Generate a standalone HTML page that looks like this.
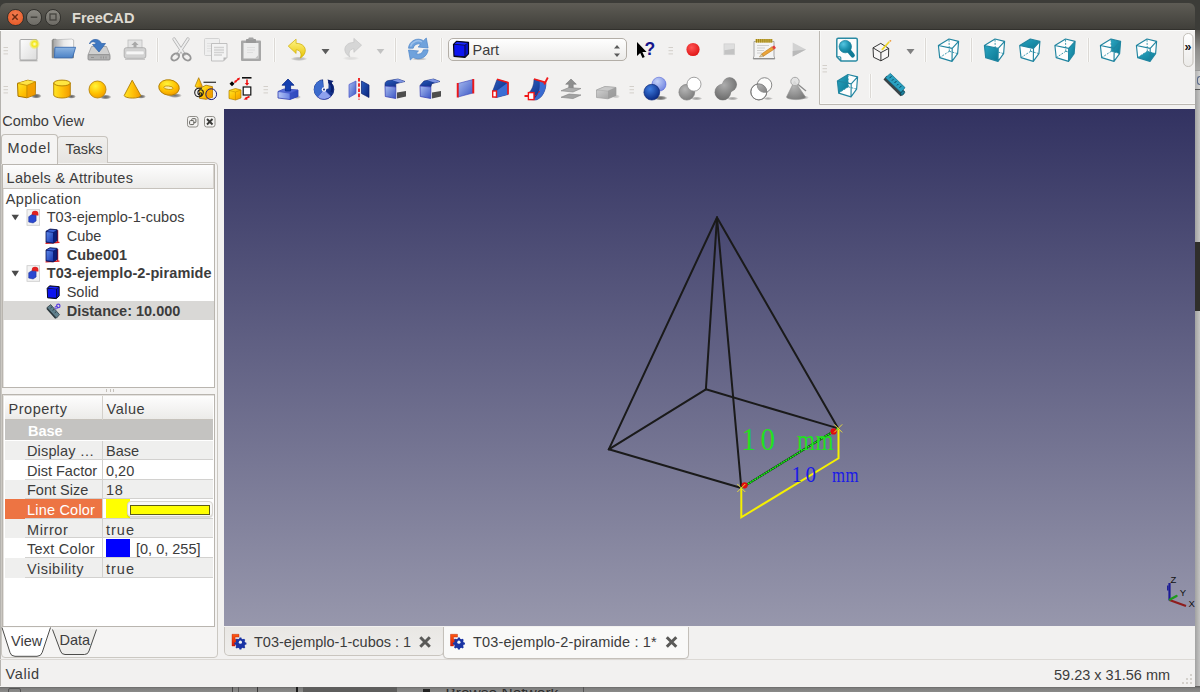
<!DOCTYPE html>
<html><head><meta charset="utf-8"><title>FreeCAD</title>
<style>
*{box-sizing:border-box;margin:0;padding:0}
html,body{width:1200px;height:692px;overflow:hidden;background:#3b3a36;font-family:"Liberation Sans","DejaVu Sans",sans-serif;font-size:14.5px;color:#3c3c3c}
.abs,.abs-all *{position:absolute}
.abs{position:absolute}
.nw{white-space:nowrap}
svg{position:absolute;overflow:visible}
#desk{left:0;top:0;width:1200px;height:692px;background:#3c3c38}
#title{left:0;top:3px;width:1195px;height:27px;background:linear-gradient(#5e5c55,#403f3a);border-radius:6px 6px 0 0;border-bottom:1px solid #32312d}
#title .t{left:72px;top:5.6px;font-weight:bold;font-size:14.6px;color:#dfdbd2;line-height:18px}
.wb{width:16.4px;height:16.4px;border-radius:50%;top:6.2px;border:1px solid #33322e}
#win{left:0;top:30px;width:1195px;height:656.5px;background:#f2f1f0;border-top:1px solid #fbfbfa}
#view{left:224px;top:109px;width:971px;height:517.4px;background:linear-gradient(#323261,#9797ac)}
#status{left:0;top:659px;width:1195px;height:28px;border-top:1px solid #dcd9d5}
.sep{width:1px;height:24px;background:#d3d0cb;border-right:1px solid #fafafa;width:2px}
.hd{width:5px;height:8px;border-top:1px solid #c9c1b9;border-bottom:1px solid #c9c1b9}
.hd:after{content:"";position:absolute;left:0;top:2.5px;width:5px;height:1px;background:#c9c1b9}
.row{left:0;height:19px;line-height:19px;white-space:nowrap}
</style></head><body>
<div id="desk" class="abs"></div>

<div class="abs" style="left:1195px;top:30px;width:5px;height:657px;background:linear-gradient(90deg,#a2a2a1,#c4c4c3)"></div>
<div class="abs" style="left:1195px;top:30px;width:5px;height:40px;background:linear-gradient(#55544f,#8f8f8d 50%,#a8a8a6)"></div>
<div class="abs" style="left:1195px;top:70px;width:5px;height:20px;background:linear-gradient(90deg,#b2b2b1,#d2d2d1);border-top:1px solid #999;border-bottom:1px solid #555"></div>
<div class="abs" style="left:1197px;top:76px;width:3px;height:9px;border:1.5px solid #5a6a8a;border-right:none;border-radius:3px 0 0 3px"></div>
<div class="abs" style="left:1195px;top:242px;width:5px;height:69px;background:#2f2e2b"></div>
<div class="abs" style="left:0;top:686px;width:1200px;height:6px;background:linear-gradient(#5c5c5b,#7e7e7d 40%,#8b8b8a)"></div>
<div class="abs" style="left:303px;top:687px;width:94px;height:5px;background:#5e5e5d"></div>
<div class="abs" style="left:232px;top:687px;width:1px;height:5px;background:#444"></div><div class="abs" style="left:238px;top:687px;width:1px;height:5px;background:#555"></div><div class="abs" style="left:257px;top:687px;width:1px;height:5px;background:#3a3a3a"></div><div class="abs" style="left:296px;top:687px;width:2px;height:5px;background:#1a1a1a"></div><div class="abs" style="left:583px;top:687px;width:1px;height:5px;background:#555"></div>
<div class="abs" style="left:8px;top:688px;width:13px;height:6px;border:1px solid #555;border-radius:2px"></div>
<div class="abs" style="left:423px;top:689px;width:7px;height:3px;background:#222"></div>
<div class="abs nw" style="left:436px;top:688.6px;height:4px;overflow:hidden;width:130px"><span class="abs" style="left:0;top:-3.2px;font-size:15.5px;line-height:16px;color:#2c2c2c">- Browse Network</span></div>

<div id="title" class="abs">
 <div class="abs wb" style="left:7.2px;background:radial-gradient(circle at 50% 35%,#f37e52,#e4531f)"><svg width="16" height="16" style="left:-1px;top:-1px" viewBox="0 0 16 16"><path d="M5.3 5.3 L10.7 10.7 M10.7 5.3 L5.3 10.7" stroke="#6b2a12" stroke-width="1.5" fill="none"/></svg></div>
 <div class="abs wb" style="left:26px;background:linear-gradient(#8b8982,#6d6b65)"><svg width="16" height="16" style="left:-1px;top:-1px" viewBox="0 0 16 16"><path d="M4.7 8.2 H11.3" stroke="#45443f" stroke-width="1.5" fill="none"/></svg></div>
 <div class="abs wb" style="left:44.5px;background:linear-gradient(#8b8982,#6d6b65)"><svg width="16" height="16" style="left:-1px;top:-1px" viewBox="0 0 16 16"><rect x="5" y="5" width="6" height="6" stroke="#45443f" stroke-width="1.3" fill="none"/></svg></div>
 <div class="abs t">FreeCAD</div>
</div>
<div id="win" class="abs"></div><div class="abs" style="left:0;top:31px;width:1px;height:655px;background:#b5b3af"></div>

<svg width="1200" height="80" style="left:0;top:30px" viewBox="0 30 1200 80" font-family="'Liberation Sans',sans-serif"><defs>
<linearGradient id="gPage" x1="0" y1="0" x2="1" y2="1"><stop offset="0" stop-color="#fdfdfd"/><stop offset="1" stop-color="#dcdcdc"/></linearGradient>
<radialGradient id="gGlow"><stop offset="0" stop-color="#ffffd0"/><stop offset=".45" stop-color="#f4e81a"/><stop offset="1" stop-color="#f4e81a" stop-opacity="0"/></radialGradient>
<linearGradient id="gFold" x1="0" y1="0" x2="0" y2="1"><stop offset="0" stop-color="#8db5e2"/><stop offset="1" stop-color="#4c82c6"/></linearGradient>
<linearGradient id="gYel" x1="0" y1="0" x2="1" y2="1"><stop offset="0" stop-color="#ffec2e"/><stop offset=".55" stop-color="#ffbf00"/><stop offset="1" stop-color="#f09800"/></linearGradient>
<linearGradient id="gYelH" x1="0" y1="0" x2="1" y2="0"><stop offset="0" stop-color="#ffe526"/><stop offset=".5" stop-color="#ffc20a"/><stop offset="1" stop-color="#f29a00"/></linearGradient>
<radialGradient id="gYelR" cx=".38" cy=".3" r=".75"><stop offset="0" stop-color="#fff53a"/><stop offset=".6" stop-color="#ffc000"/><stop offset="1" stop-color="#f09a00"/></radialGradient>
<linearGradient id="gUndo" x1="0" y1="0" x2="0" y2="1"><stop offset="0" stop-color="#fff68a"/><stop offset="1" stop-color="#e8c200"/></linearGradient>
<radialGradient id="gLens" cx=".35" cy=".3" r=".8"><stop offset="0" stop-color="#56c6e2"/><stop offset=".55" stop-color="#1d93b0"/><stop offset="1" stop-color="#0b748f"/></radialGradient>
<radialGradient id="gFuse" gradientUnits="userSpaceOnUse" cx="-2" cy="-4" r="15"><stop offset="0" stop-color="#adadad"/><stop offset="1" stop-color="#6c6c6c"/></radialGradient>
<linearGradient id="gPap" x1="0" y1="0" x2="1" y2="0"><stop offset="0" stop-color="#a9a9a9"/><stop offset=".5" stop-color="#e9e9e9"/><stop offset="1" stop-color="#fafafa"/></linearGradient>
<linearGradient id="gBlueE" x1="0" y1="0" x2="1" y2="0"><stop offset="0" stop-color="#b4c4f4"/><stop offset=".6" stop-color="#6a84e4"/><stop offset="1" stop-color="#3f5ad0"/></linearGradient>
<radialGradient id="gRec" cx=".4" cy=".35" r=".7"><stop offset="0" stop-color="#f55"/><stop offset="1" stop-color="#de1212"/></radialGradient>
<linearGradient id="gTeal" x1="0" y1="0" x2="1" y2="1"><stop offset="0" stop-color="#2ba6c2"/><stop offset="1" stop-color="#0b7893"/></linearGradient>
<linearGradient id="gBlue" x1="0" y1="0" x2="1" y2="1"><stop offset="0" stop-color="#a9bdf0"/><stop offset="1" stop-color="#3a55c4"/></linearGradient>
<linearGradient id="gBlueD" x1="0" y1="0" x2="1" y2="1"><stop offset="0" stop-color="#2a5fc0"/><stop offset="1" stop-color="#0a237a"/></linearGradient>
<radialGradient id="gBlueS" cx=".38" cy=".3" r=".75"><stop offset="0" stop-color="#3f7de0"/><stop offset="1" stop-color="#06257e"/></radialGradient>
<radialGradient id="gBlueL" cx=".38" cy=".3" r=".75"><stop offset="0" stop-color="#c4d2f8"/><stop offset="1" stop-color="#6f83e0"/></radialGradient>
<radialGradient id="gGryS" cx=".38" cy=".3" r=".75"><stop offset="0" stop-color="#b5b5b5"/><stop offset="1" stop-color="#7a7a7a"/></radialGradient>
<linearGradient id="gGry" x1="0" y1="0" x2="1" y2="1"><stop offset="0" stop-color="#d6d6d6"/><stop offset="1" stop-color="#9c9c9c"/></linearGradient>
<linearGradient id="gCombo" x1="0" y1="0" x2="0" y2="1"><stop offset="0" stop-color="#ffffff"/><stop offset="1" stop-color="#ebeae8"/></linearGradient>
<radialGradient id="gShd"><stop offset="0" stop-color="#000" stop-opacity=".75"/><stop offset=".6" stop-color="#000" stop-opacity=".5"/><stop offset="1" stop-color="#000" stop-opacity="0"/></radialGradient>
</defs><path d="M819.5 31V104.5H1195" stroke="#bdb9b3" stroke-width="1" fill="none"/>
<path d="M820.5 31V103.5H1195" stroke="#fbfbfa" stroke-width="1" fill="none" opacity=".7"/>
<path d="M3.5 47.5h4.5M3.5 50.7h4.5M3.5 53.9h4.5" stroke="#d3cfca" stroke-width="1"/>
<g transform="translate(28.5 49.5)"><rect x="-8.5" y="-10" width="17" height="20.5" rx="1" fill="url(#gPage)" stroke="#a9a9a9"/><path d="M-9 11.3h18" stroke="#8e8e8e" stroke-width="1" opacity=".7"/><circle cx="6" cy="-5.5" r="5.6" fill="url(#gGlow)"/></g>
<g transform="translate(64 49)"><path d="M-11.8 -8.7 l.8 -1 h3 l1 1 h16.5 v17.5 h-21.3z" fill="#8f8f8b" stroke="#767672" stroke-width=".7"/><path d="M-10 -9.2 l17.5 -.8 l2.2 1.2 v8 h-19.7z" fill="url(#gPap)" stroke="#b5b5b5" stroke-width=".6"/><path d="M-9 -1.7 h20.6 l-3.1 10.5 h-18.1z" fill="url(#gFold)" stroke="#3a6db2" stroke-width=".9" stroke-linejoin="round"/></g>
<g transform="translate(99 49.5)"><path d="M-7.5 -3 h15 l3.5 8.5 h-22z" fill="#d0d0d0" stroke="#9a9a9a" stroke-width=".8"/><rect x="-11" y="5.2" width="22" height="5.3" rx="1" fill="#b2b2b2" stroke="#868686" stroke-width=".8"/><path d="M-8 8h3M2 7v2M4.5 7v2M7 7v2" stroke="#8a8a8a" stroke-width=".8"/><path d="M-9.5 -5.5 C-8.5 -11 0 -12 2.5 -6 L6.5 -6 L0 2.5 L-6.5 -5 L-2.8 -5.5 C-4 -8.5 -7.5 -8.5 -9.5 -5.5z" fill="#3f78c2" stroke="#2b5ea5" stroke-width=".7"/></g>
<g transform="translate(135 49.5)"><rect x="-7" y="-9.5" width="14" height="9" fill="#e4e4e4" stroke="#bdbdbd" stroke-width=".8"/><path d="M0 -8 l3.6 3.4 h-2.1 v2.8 h-3 v-2.8 h-2.1z" fill="#a8a8a8"/><rect x="-10.8" y="-1.8" width="21.6" height="10.6" rx="2.2" fill="#d2d2d2" stroke="#ababab" stroke-width=".9"/><rect x="-9" y="1.6" width="18" height="3.6" rx="1" fill="#f6f6f6" stroke="#c9c9c9" stroke-width=".5"/><path d="M-10 9.8h20" stroke="#bdbdbd"/></g>
<path d="M156.5 38v24M158.5 38v24" stroke="#f9f9f8" stroke-width="1"/><path d="M157.5 38v24" stroke="#dcd9d5" stroke-width="1"/>
<g transform="translate(181 50)"><path d="M-7 -11 L3.2 4.5 M7 -11 L-3.2 4.5" stroke="#b2b2b2" stroke-width="3.2" stroke-linecap="round"/><path d="M-7 -11 L3.2 4.5 M7 -11 L-3.2 4.5" stroke="#eeeeee" stroke-width="1.8" stroke-linecap="round"/><ellipse cx="-5.8" cy="7" rx="4.2" ry="3" transform="rotate(-35 -5.8 7)" fill="none" stroke="#979797" stroke-width="1.9"/><ellipse cx="5.8" cy="7" rx="4.2" ry="3" transform="rotate(35 5.8 7)" fill="none" stroke="#979797" stroke-width="1.9"/></g>
<g transform="translate(216 49.5)"><rect x="-11.5" y="-11" width="15" height="17" rx="1" fill="#efefef" stroke="#cfcfcf" stroke-width=".9"/><path d="M-9 -6h6M-9 -3.5h6M-9 -1h6M-9 1.5h6" stroke="#dcdcdc" stroke-width=".8"/><path d="M-4.5 -6 h15.5 v14 l-3.5 3.5 h-12z" fill="#f3f3f3" stroke="#bababa" stroke-width=".9"/><path d="M-2 -2h10M-2 .5h10M-2 3h10M-2 5.5h8" stroke="#d2d2d2" stroke-width="1.6"/><path d="M11 8 l-3.5 3.5 v-3.5z" fill="#b5b5b5"/></g>
<g transform="translate(251 49.5)"><rect x="-10" y="-9" width="20" height="20.5" rx="1" fill="#a7a7a7"/><rect x="-7.5" y="-6.5" width="15" height="15.5" fill="#ededed"/><rect x="-5" y="-10.5" width="10" height="4" rx=".8" fill="#9a9a9a"/><rect x="-2.5" y="-12" width="5" height="2.5" rx=".8" fill="#a3a3a3"/><path d="M-4 -2h8M-4 .5h8M-4 3h6" stroke="#dedede" stroke-width="1.2"/><path d="M7.5 5.5 l-3.5 3.5 h3.5z" fill="#c2c2c2"/></g>
<path d="M273.5 38v24M275.5 38v24" stroke="#f9f9f8" stroke-width="1"/><path d="M274.5 38v24" stroke="#dcd9d5" stroke-width="1"/>
<g transform="translate(297 49.3)"><ellipse cx="2" cy="9.5" rx="8.5" ry="2.2" fill="url(#gShd)" opacity="0.35"/><path transform="scale(.92)" d="M-9.5 -3.5 L-1 -11 L-1 -6.5 C7 -6.5 10.5 -1 8.5 4 C7.5 6.5 5.5 8.5 3.5 9.5 C5 6.5 5 1 -1 0.5 L-1 4.5z" fill="url(#gUndo)" stroke="#cfae08" stroke-width=".8" stroke-linejoin="round"/></g>
<g transform="translate(325.5 51.5)"><path d="M-4 -2.6h8L0 2.8z" fill="#5b5b5b"/></g>
<g transform="translate(353 48.3)"><ellipse cx="-2" cy="10" rx="8.5" ry="2" fill="url(#gShd)" opacity="0.12"/><path transform="scale(.9)" d="M9.5 -3.5 L1 -11 L1 -6.5 C-7 -6.5 -10.5 -1 -8.5 4 C-7.5 6.5 -5.5 8.5 -3.5 9.5 C-5 6.5 -5 1 1 0.5 L1 4.5z" fill="#d6d6d6" stroke="#c4c4c4" stroke-width=".8" stroke-linejoin="round"/></g>
<g transform="translate(380.5 51.5)"><path d="M-3.8 -2.5h7.6L0 2.6z" fill="#c2c2c2"/></g>
<path d="M394.5 38v24M396.5 38v24" stroke="#f9f9f8" stroke-width="1"/><path d="M395.5 38v24" stroke="#dcd9d5" stroke-width="1"/>
<g transform="translate(418.3 49)"><ellipse cx="1" cy="10" rx="8" ry="1.6" fill="url(#gShd)" opacity="0.3"/><path d="M-9.8 -.8 A9.8 9.8 0 0 1 5.2 -8.3 L8 -11 L9.8 -1 L-.2 -2 L2.4 -4.5 A5.1 5.1 0 0 0 -5.1 -.8z" fill="#6fa2dc" stroke="#4a84c8" stroke-width=".7" stroke-linejoin="round"/><path transform="rotate(180)" d="M-9.8 -.8 A9.8 9.8 0 0 1 5.2 -8.3 L8 -11 L9.8 -1 L-.2 -2 L2.4 -4.5 A5.1 5.1 0 0 0 -5.1 -.8z" fill="#6fa2dc" stroke="#4a84c8" stroke-width=".7" stroke-linejoin="round"/><path d="M-7.8 -2.5 A8 8 0 0 1 3.5 -7.2" stroke="#a9c8ee" stroke-width="1.5" fill="none" opacity=".8"/></g>
<path d="M440.5 38v24M442.5 38v24" stroke="#f9f9f8" stroke-width="1"/><path d="M441.5 38v24" stroke="#dcd9d5" stroke-width="1"/>
<rect x="448.5" y="38.5" width="178" height="22" rx="4.5" fill="url(#gCombo)" stroke="#b3aea7"/>
<g transform="translate(461 49.3) scale(1)"><path d="M-7.5 -5 L-4.5 -8 L7.5 -7 L7.5 4.5 L4 8 L-7 7z" fill="#0a0a2a" stroke="#05051a" stroke-width="1.2" stroke-linejoin="round"/><path d="M-6.8 -4.5 L3.5 -3.8 L3.5 7 L-6.5 6.2z" fill="#0c14f0"/><path d="M-6.5 -5.2 L-4.2 -7.3 L6.8 -6.4 L3.8 -4.5z" fill="#1a28ff"/><path d="M4.4 -4 L7 -6.2 L7 4.2 L4.4 6.8z" fill="#0610c8"/></g>
<text x="472.5" y="54.5" font-size="14.5" fill="#3c3c3c">Part</text>
<path d="M614 48.5 l3 -3.6 l3 3.6z M614 53.5 l3 3.6 l3 -3.6z" fill="#5a5a5a"/>
<g transform="translate(645 50)"><path d="M-8 -8 L-8 6 L-4.8 3 L-2.5 8 L-0.3 7 L-2.6 2 L1.6 2z" fill="#000"/><text x="-.6" y="4.6" font-size="17.5" font-weight="bold" fill="#16168c">?</text></g>
<path d="M668.5 47.5h4.5M668.5 50.7h4.5M668.5 53.9h4.5" stroke="#d3cfca" stroke-width="1"/>
<g transform="translate(693 49.5)"><circle r="6.6" fill="url(#gRec)"/></g>
<g transform="translate(729.2 49.3)"><rect x="-5.2" y="-5.4" width="10.6" height="10.8" fill="#dedede" stroke="#cdcdcd" stroke-width=".7"/><path d="M-4.8 5 v-4 l9.8 -1.6 v5.6z" fill="#c3c3c3"/></g>
<g transform="translate(764 49)"><path d="M-10 -7.5 h20 v14.5 l.8 2.5 h-21.6 l.8 -2.5z" fill="#f4f4f4" stroke="#9d9d9d" stroke-width=".9"/><path d="M-10.8 9.8h21.6" stroke="#8a8a8a" stroke-width="1.2"/><rect x="-8.5" y="-10" width="17" height="3.6" fill="#cdb24a"/><path d="M-7.5 -10v3.6M-5.4 -10v3.6M-3.3 -10v3.6M-1.2 -10v3.6M.9 -10v3.6M3 -10v3.6M5.1 -10v3.6M7.2 -10v3.6" stroke="#8a6d00" stroke-width=".7"/><path d="M-7 -3.5h12M-7 -1h8M-7 1.5h7M-7 4h5" stroke="#c9c9c9" stroke-width=".9"/><path d="M-2.5 5 L8 -2.2 L9.8 .4 L-.7 7.3z" fill="#eba53a" stroke="#b87316" stroke-width=".6"/><path d="M8 -2.2 L10.2 -3.6 L12 -1 L9.8 .4z" fill="#e23c3c"/><path d="M-2.5 5 L-.7 7.3 L-4.6 8z" fill="#e6d3a0" stroke="#8a6d3a" stroke-width=".4"/></g>
<g transform="translate(798 49.5)"><path d="M-5.3 -7 L8 0 L-5.3 7z" fill="#d2d2d2"/><path d="M-5.3 7 L-5.3 1.5 L8 0z" fill="#b9b9b9"/></g>
<path d="M822.5 65.5h4.5M822.5 68.7h4.5M822.5 71.9h4.5" stroke="#d3cfca" stroke-width="1"/>
<g transform="translate(847 49.5)"><path d="M-8.8 -11.2 h17.7 a1.4 1.4 0 0 1 1.4 1.4 v19.8 a1.4 1.4 0 0 1 -1.4 1.4 h-15 l-4.1 -4.1 v-17.1 a1.4 1.4 0 0 1 1.4 -1.4z" fill="#fcfcfc" stroke="#2a8aa3" stroke-width="1.5" stroke-linejoin="round"/><path d="M-10 7.2 h2.8 a1 1 0 0 1 1 1 v3" fill="none" stroke="#2a8aa3" stroke-width="1.1"/><path d="M2.2 1.6 L5.7 5.9" stroke="#0f7b96" stroke-width="4.3" stroke-linecap="round"/><circle cx="-1.7" cy="-2.9" r="6.2" fill="url(#gLens)" stroke="#0f7b96" stroke-width=".7"/></g>
<g transform="translate(881 50)"><path d="M-8 -2.2 L-.2 -6.6 L7.7 -1.6 L7.5 6.6 L-.1 10.8 L-7.5 7.2z M-8 -2.2 L-.1 2.6 L7.7 -1.6 M-.1 2.6 L-.1 10.8" fill="#fafafa" fill-opacity=".6" stroke="#2c2c2c" stroke-width=".95" stroke-linejoin="round"/><path d="M1.3 -.6 L7.8 -7.8" stroke="#f0d828" stroke-width="1.7" stroke-linecap="round"/><circle cx="9.4" cy="-9.2" r=".9" fill="#ef9a3a"/></g>
<g transform="translate(910.5 51.5)"><path d="M-4 -2.6h8L0 2.8z" fill="#808080"/></g>
<path d="M924.5 38v24M926.5 38v24" stroke="#f9f9f8" stroke-width="1"/><path d="M925.5 38v24" stroke="#dcd9d5" stroke-width="1"/>
<g transform="translate(948 50)"><path d="M-9.6 -4.5 L1 -11 L10.6 -8.6 L9.6 3.6 L4.0 11.4 L-8.3 7.6z" fill="#ffffff" fill-opacity=".85"/><path d="M1.3 1.3 L1 -11 M1.3 1.3 L9.6 3.6 M1.3 1.3 L-8.3 7.6" stroke="#2b8ea6" stroke-width=".9" stroke-dasharray="2 1.2" fill="none"/><path d="M-9.6 -4.5 L4.2 -1.6 L4.0 11.4 L-8.3 7.6z M-9.6 -4.5 L1 -11 L10.6 -8.6 L4.2 -1.6z M4.2 -1.6 L10.6 -8.6 L9.6 3.6 L4.0 11.4z" fill="none" stroke="#2185a0" stroke-width="1.15" stroke-linejoin="round"/></g>
<path d="M970.5 38v24M972.5 38v24" stroke="#f9f9f8" stroke-width="1"/><path d="M971.5 38v24" stroke="#dcd9d5" stroke-width="1"/>
<g transform="translate(994 50)"><path d="M-9.6 -4.5 L1 -11 L10.6 -8.6 L9.6 3.6 L4.0 11.4 L-8.3 7.6z" fill="#ffffff" fill-opacity=".85"/><path d="M1.3 1.3 L1 -11 M1.3 1.3 L9.6 3.6 M1.3 1.3 L-8.3 7.6" stroke="#2b8ea6" stroke-width=".9" stroke-dasharray="2 1.2" fill="none"/><path d="M-9.6 -4.5 L4.2 -1.6 L4.0 11.4 L-8.3 7.6z" fill="url(#gTeal)"/><path d="M-9.6 -4.5 L4.2 -1.6 L4.0 11.4 L-8.3 7.6z M-9.6 -4.5 L1 -11 L10.6 -8.6 L4.2 -1.6z M4.2 -1.6 L10.6 -8.6 L9.6 3.6 L4.0 11.4z" fill="none" stroke="#2185a0" stroke-width="1.15" stroke-linejoin="round"/></g>
<g transform="translate(1029.3 50)"><path d="M-9.6 -4.5 L1 -11 L10.6 -8.6 L9.6 3.6 L4.0 11.4 L-8.3 7.6z" fill="#ffffff" fill-opacity=".85"/><path d="M1.3 1.3 L1 -11 M1.3 1.3 L9.6 3.6 M1.3 1.3 L-8.3 7.6" stroke="#2b8ea6" stroke-width=".9" stroke-dasharray="2 1.2" fill="none"/><path d="M-9.6 -4.5 L4.2 -1.6 L10.6 -8.6 L1 -11z" fill="url(#gTeal)"/><path d="M-9.6 -4.5 L4.2 -1.6 L4.0 11.4 L-8.3 7.6z M-9.6 -4.5 L1 -11 L10.6 -8.6 L4.2 -1.6z M4.2 -1.6 L10.6 -8.6 L9.6 3.6 L4.0 11.4z" fill="none" stroke="#2185a0" stroke-width="1.15" stroke-linejoin="round"/></g>
<g transform="translate(1064.5 50)"><path d="M-9.6 -4.5 L1 -11 L10.6 -8.6 L9.6 3.6 L4.0 11.4 L-8.3 7.6z" fill="#ffffff" fill-opacity=".85"/><path d="M1.3 1.3 L1 -11 M1.3 1.3 L9.6 3.6 M1.3 1.3 L-8.3 7.6" stroke="#2b8ea6" stroke-width=".9" stroke-dasharray="2 1.2" fill="none"/><path d="M4.2 -1.6 L10.6 -8.6 L9.6 3.6 L4.0 11.4z" fill="url(#gTeal)"/><path d="M-9.6 -4.5 L4.2 -1.6 L4.0 11.4 L-8.3 7.6z M-9.6 -4.5 L1 -11 L10.6 -8.6 L4.2 -1.6z M4.2 -1.6 L10.6 -8.6 L9.6 3.6 L4.0 11.4z" fill="none" stroke="#2185a0" stroke-width="1.15" stroke-linejoin="round"/></g>
<path d="M1087.5 38v24M1089.5 38v24" stroke="#f9f9f8" stroke-width="1"/><path d="M1088.5 38v24" stroke="#dcd9d5" stroke-width="1"/>
<g transform="translate(1110 50)"><path d="M-9.6 -4.5 L1 -11 L10.6 -8.6 L9.6 3.6 L4.0 11.4 L-8.3 7.6z" fill="#ffffff" fill-opacity=".85"/><path d="M1 -11 L10.6 -8.6 L9.6 3.6 L1.3 1.3z" fill="url(#gTeal)"/><path d="M1.3 1.3 L1 -11 M1.3 1.3 L9.6 3.6 M1.3 1.3 L-8.3 7.6" stroke="#2b8ea6" stroke-width=".9" stroke-dasharray="2 1.2" fill="none"/><path d="M-9.6 -4.5 L4.2 -1.6 L4.0 11.4 L-8.3 7.6z M-9.6 -4.5 L1 -11 L10.6 -8.6 L4.2 -1.6z M4.2 -1.6 L10.6 -8.6 L9.6 3.6 L4.0 11.4z" fill="none" stroke="#2185a0" stroke-width="1.15" stroke-linejoin="round"/></g>
<g transform="translate(1146 50)"><path d="M-9.6 -4.5 L1 -11 L10.6 -8.6 L9.6 3.6 L4.0 11.4 L-8.3 7.6z" fill="#ffffff" fill-opacity=".85"/><path d="M-8.3 7.6 L4.0 11.4 L9.6 3.6 L1.3 1.3z" fill="url(#gTeal)"/><path d="M1.3 1.3 L1 -11 M1.3 1.3 L9.6 3.6 M1.3 1.3 L-8.3 7.6" stroke="#2b8ea6" stroke-width=".9" stroke-dasharray="2 1.2" fill="none"/><path d="M-9.6 -4.5 L4.2 -1.6 L4.0 11.4 L-8.3 7.6z M-9.6 -4.5 L1 -11 L10.6 -8.6 L4.2 -1.6z M4.2 -1.6 L10.6 -8.6 L9.6 3.6 L4.0 11.4z" fill="none" stroke="#2185a0" stroke-width="1.15" stroke-linejoin="round"/></g>
<g transform="translate(847 85.5)"><path d="M-9.6 -4.5 L1 -11 L10.6 -8.6 L9.6 3.6 L4.0 11.4 L-8.3 7.6z" fill="#ffffff" fill-opacity=".85"/><path d="M-9.6 -4.5 L1 -11 L1.3 1.3 L-8.3 7.6z" fill="url(#gTeal)"/><path d="M1.3 1.3 L1 -11 M1.3 1.3 L9.6 3.6 M1.3 1.3 L-8.3 7.6" stroke="#2b8ea6" stroke-width=".9" stroke-dasharray="2 1.2" fill="none"/><path d="M-9.6 -4.5 L4.2 -1.6 L4.0 11.4 L-8.3 7.6z M-9.6 -4.5 L1 -11 L10.6 -8.6 L4.2 -1.6z M4.2 -1.6 L10.6 -8.6 L9.6 3.6 L4.0 11.4z" fill="none" stroke="#2185a0" stroke-width="1.15" stroke-linejoin="round"/></g>
<path d="M869.5 74v24M871.5 74v24" stroke="#f9f9f8" stroke-width="1"/><path d="M870.5 74v24" stroke="#dcd9d5" stroke-width="1"/>
<g transform="translate(894 85)"><path d="M-10.5 -5.5 L-7.5 -9.2 L9.5 5 L9.8 9 L6.5 11.2z" fill="#3a4448"/><path d="M-8.6 -7.3 L-3.6 -11.6 L11 2.6 L7.2 7.6z" fill="#2aa0c0" stroke="#0d6f8a" stroke-width=".7"/><path d="M-4.5 -6.8l2-2M-2 -4.4l1.4-1.4M.5 -2l2-2M3 .4l1.4-1.4M5.5 2.8l2-2" stroke="#083848" stroke-width=".9"/><ellipse cx="8.6" cy="8" rx="1.6" ry="2.6" transform="rotate(40 8.6 8)" fill="#1b7f9a" stroke="#083848" stroke-width=".6"/></g>
<rect x="1183.5" y="33.5" width="9.5" height="33" rx="4.5" fill="url(#gCombo)" stroke="#c3bfb9"/>
<text x="1184.4" y="51" font-size="12.5" font-weight="bold" fill="#111" letter-spacing="-1">&#187;</text>
<path d="M3.5 86.5h4.5M3.5 89.7h4.5M3.5 92.9h4.5" stroke="#d3cfca" stroke-width="1"/>
<g transform="translate(26.7 89)"><ellipse cx="9.5" cy="7" rx="5.5" ry="2.6" fill="url(#gShd)" opacity="0.85"/><path d="M-9.2 -5.7 L1.2 -8.8 L8.8 -7.2 L8.5 5.6 L.2 8.8 L-8.7 7.2z" fill="url(#gYel)" stroke="#a87400" stroke-width="1" stroke-linejoin="round"/><path d="M.2 -3.6 L8.8 -7.2 L8.5 5.6 L.2 8.8z" fill="#f09a00" opacity=".8"/><path d="M-9.2 -5.7 L1.2 -8.8 L8.8 -7.2 L.2 -3.6z" fill="#ffe54a" opacity=".9"/><path d="M-9.2 -5.7 L.2 -3.6 L8.8 -7.2 M.2 -3.6 L.2 8.8" fill="none" stroke="#bb8600" stroke-width=".8"/></g>
<g transform="translate(62 89)"><ellipse cx="9.5" cy="7.5" rx="4.5" ry="2.2" fill="url(#gShd)" opacity="0.8"/><path d="M-8.3 -6 V6 A8.3 3 0 0 0 8.3 6 V-6z" fill="url(#gYelH)" stroke="#b07d00" stroke-width=".9"/><ellipse cx="0" cy="-6" rx="8.3" ry="2.9" fill="#ffe640" stroke="#b07d00" stroke-width=".9"/></g>
<g transform="translate(97.5 89.5)"><ellipse cx="8" cy="7.5" rx="6" ry="2.4" fill="url(#gShd)" opacity="0.8"/><circle r="8.5" fill="url(#gYelR)" stroke="#b9860a" stroke-width=".9"/></g>
<g transform="translate(132.5 89)"><ellipse cx="8.5" cy="7.5" rx="5" ry="2.2" fill="url(#gShd)" opacity="0.8"/><path d="M-.3 -8.8 L-8.3 6.5 A8.3 2.6 0 0 0 8.3 6.5z" fill="url(#gYelH)" stroke="#b07d00" stroke-width=".9" stroke-linejoin="round"/></g>
<g transform="translate(169 87.5)"><ellipse cx="6" cy="8" rx="7" ry="2.4" fill="url(#gShd)" opacity="0.7"/><ellipse cx="0" cy="0" rx="10.3" ry="7.7" transform="rotate(8)" fill="url(#gYelR)" stroke="#b07d00" stroke-width=".9"/><ellipse cx="-.5" cy=".3" rx="4.6" ry="1.7" transform="rotate(5)" fill="#f7ecaa" stroke="#c08a00" stroke-width=".8"/></g>
<g transform="translate(205 89)"><path d="M-5.5 -.5 L1 -3.8 L7.5 -2.3 L7.5 8.3 L1 10.3 L-5.5 9.3z" fill="url(#gYel)" stroke="#a87400" stroke-width=".8"/><path d="M1 .5 L7.5 -2.3 L7.5 8.3 L1 10.3z" fill="#f09a00" opacity=".7"/><path d="M-6.3 -11.3 L-9.9 -2.8 A3.6 1.2 0 0 0 -2.7 -2.8z" fill="url(#gYelH)" stroke="#a87400" stroke-width=".7"/><path d="M-1.5 -6.7h12.5" stroke="#3a3a3a" stroke-width="1.3"/><circle cx="6.2" cy="5.2" r="5.4" fill="none" stroke="#1a1a7a" stroke-width="1"/><path d="M-5.6 5 a1.2 1.2 0 1 1 1.2 1.2 a2.7 2.7 0 1 1 2.7 -2.7 a4.3 4.3 0 1 1 -4.3 -4.3 h3" fill="none" stroke="#1c1c1c" stroke-width="1.1"/></g>
<g transform="translate(240 89)"><path d="M-8 -7.8 L-5.5 -5.3 L-8 -2.8 L-10.5 -5.3z" fill="#000"/><path d="M2 -11.2h9.5" stroke="#111" stroke-width="1.6"/><rect x="3.2" y="-2" width="7.6" height="8" fill="#fff" stroke="#111" stroke-width="1.2"/><path d="M-5 -7 L-1 -10.5" stroke="#e11" stroke-width="1.6"/><path d="M-6 -6 l1 -3 l2 2z M0 -11.5 l-1 3 l-2 -2z" fill="#e11"/><path d="M7 -9.5 V-5" stroke="#e11" stroke-width="1.6"/><path d="M7 -3.3 l-2.2 -2.7 h4.4z" fill="#e11"/><path d="M9.5 7.5 L5.5 9.5" stroke="#e11" stroke-width="1.6"/><path d="M3.5 10.5 l3 -2.4 l1 2.6z" fill="#e11"/><path d="M-11 1.5 L-4.5 -.5 L1 1 L1 9 L-4.5 11 L-11 9.5z" fill="url(#gYel)" stroke="#b07d00" stroke-width=".7"/><path d="M-11 1.5 L-4.5 3 L1 1 M-4.5 3 V11" stroke="#c48f00" stroke-width=".6" fill="none"/></g>
<path d="M263.5 86.5h4.5M263.5 89.7h4.5M263.5 92.9h4.5" stroke="#d3cfca" stroke-width="1"/>
<g transform="translate(288 89)"><ellipse cx="9" cy="8" rx="4" ry="2" fill="url(#gShd)" opacity="0.4"/><path d="M-10 2.5 L-4 0 L10 1 L10 7.5 L2 10.5 L-10 9z" fill="url(#gBlueE)" stroke="#2f3cb0" stroke-width=".8" stroke-linejoin="round"/><path d="M2 4.2 L10 1 L10 7.5 L2 10.5z" fill="#2a44b8" opacity=".75"/><path d="M-10 2.5 L-4 0 L10 1 L2 4.2z" fill="#4a62d4" opacity=".8"/><path d="M-10 2.5 L2 4.2 L10 1 M2 4.2V10.5" fill="none" stroke="#3a4cc0" stroke-width=".6"/><path d="M0 -10 L6 -3.8 L2.6 -3.8 L2.6 2 L-2.6 2 L-2.6 -3.8 L-6 -3.8z" fill="#1540b0" stroke="#0a2a8a" stroke-width=".8" stroke-linejoin="round"/></g>
<g transform="translate(324 89.5)"><circle r="9.8" fill="url(#gBlueD)" stroke="#0a1f70" stroke-width=".9"/><path d="M0 0 L-6.5 7.5 A9.8 9.8 0 0 0 7 6.8z" fill="#8ea2ee" stroke="#3a44b8" stroke-width=".6"/><path d="M0 0 L-2 -9.6 A9.8 9.8 0 0 0 -6.5 7.5z" fill="#3f6fd0" opacity=".9"/><path d="M-1 -10.5 L4.5 -10.5 L4.5 -1 L0 0z" fill="#f2f1f0"/><circle cx="0" cy="0" r="2.3" fill="#f6f6fa"/><circle cx="0" cy="0" r=".9" fill="#0a1f70"/><path d="M4.5 -7.5 C8 -6 9 -1.5 7.5 2.5" fill="none" stroke="#0a1f70" stroke-width="2"/><path d="M3.5 -10 L9.5 -8.5 L5.5 -4.5z" fill="#0a1f70"/></g>
<g transform="translate(359 89)"><path d="M-10 -4.5 L-3 -8 L-3 4.5 L-10 8.5z" fill="url(#gBlue)" stroke="#4a55c8" stroke-width=".7"/><path d="M2.5 -8 L10 -4 L10 8.5 L2.5 4.5z" fill="url(#gBlueD)" stroke="#0a1f70" stroke-width=".7"/><path d="M0 -11 V10.5" stroke="#f01818" stroke-width="1.8" stroke-dasharray="3.6 1.6"/></g>
<g transform="translate(395 89)"><path d="M2 3.5 L11 2 L11 7.5 L2 9.5z" fill="#4d4d4d"/><path d="M-10 -5 C-10 -7.5 -8 -8.3 -6 -8.5 L3 -10 L10 -7.5 L1.5 -5.5 C1 -5.3 .8 -5 .8 -4 L.8 -2 L-10 -3z" fill="url(#gBlueD)" stroke="#0a1f70" stroke-width=".6"/><path d="M3 -10 L10 -7.5 L5 -6.3 L-2.5 -8.8z" fill="#8ea2ee" opacity=".85"/><path d="M-10 -3 L.8 -2 L.8 9.5 L-9.7 7.5z" fill="url(#gBlue)" stroke="#3a44b8" stroke-width=".8" stroke-linejoin="round"/></g>
<g transform="translate(430 89)"><path d="M2 3.5 L11 2 L11 7.5 L2 9.5z" fill="#4d4d4d"/><path d="M-10 -3.5 L-6 -8 L3.5 -10 L10 -7.5 L1.8 -5.3 L.8 -2 L-10 -3.2z" fill="url(#gBlueD)" stroke="#0a1f70" stroke-width=".6"/><path d="M3 -10 L10 -7.5 L5 -6.3 L-2.5 -8.8z" fill="#8ea2ee" opacity=".85"/><path d="M-10 -3 L.8 -2 L.8 9.5 L-9.7 7.5z" fill="url(#gBlue)" stroke="#3a44b8" stroke-width=".8" stroke-linejoin="round"/></g>
<g transform="translate(465.5 88)"><path d="M-7.5 -4.5 L7.5 -8.5 L7.5 5 L-7.5 9z" fill="url(#gBlue)" stroke="#3a44b8" stroke-width=".6"/><path d="M-7.8 -5 V9.5 M7.8 -9 V5.5" stroke="#f01818" stroke-width="1.9"/></g>
<g transform="translate(500 88)"><path d="M-3 -8.5 L8 -5.5 L8 6.5 L-3.5 9.5 L-7.5 8.5 L-7.5 3.5z" fill="url(#gBlueD)" stroke="#0a1f70" stroke-width=".5"/><path d="M-3.5 3 L8 -5.5 L8 6.5 L-3.5 9.5z" fill="#3f74dc" opacity=".9"/><path d="M-3 -8.8 L8 -5.5 V6.5" fill="none" stroke="#f01818" stroke-width="1.7" stroke-linejoin="round"/><rect x="-7.3" y="3" width="3.8" height="6" fill="#fff" stroke="#f01818" stroke-width="1.4"/></g>
<g transform="translate(537 89)"><path d="M-3 -9.8 L9 -6.3 C9 2 5 9 -1 11 L-8 10.5 L-8 3.5 C-5 1 -3 -4 -3 -9.8z" fill="url(#gBlueD)" stroke="#0a1f70" stroke-width=".5"/><path d="M2.5 -8.2 L9 -6.3 C9 2 5 9 -1 11 L-4 10.8 C1.5 7 3.5 0 2.5 -8.2z" fill="#3f74dc" opacity=".85"/><path d="M-3 -10 L9 -6.3" stroke="#f01818" stroke-width="1.8"/><path d="M7.2 -4.5 L10.8 -11.5" stroke="#f01818" stroke-width="1.8"/><rect x="-8.6" y="3.6" width="5.6" height="7" fill="#fff" stroke="#f01818" stroke-width="1.4"/><path d="M-12.5 7h4" stroke="#f01818" stroke-width="2"/><path d="M2.5 2 C1.5 4.5 0 6 -2.5 7" stroke="#f01818" stroke-width="1" stroke-dasharray="2 1" fill="none"/></g>
<g transform="translate(571 89)"><path d="M0 -10 L5.3 -4.8 L2.2 -4.8 L2.2 -.8 L-2.2 -.8 L-2.2 -4.8 L-5.3 -4.8z" fill="#8e8e8e" stroke="#7a7a7a" stroke-width=".6"/><path d="M-10 1.8 L-2 -1.5 L10 -.5 L2 3z" fill="#adadad" stroke="#858585" stroke-width=".6"/><path d="M-10 8.3 L-2 5 L10 6 L2 9.6z" fill="#a3a3a3" stroke="#808080" stroke-width=".6"/></g>
<g transform="translate(607 93)"><ellipse cx="9" cy="3.5" rx="4" ry="2" fill="url(#gShd)" opacity="0.25"/><path d="M-10.5 -3 L-2 -6.5 L9 -5.5 L9 2.5 L1 5.8 L-10.5 4.5z" fill="url(#gGry)" stroke="#9d9d9d" stroke-width=".7" stroke-linejoin="round"/><path d="M-10.5 -3 L-2 -6.5 L9 -5.5 L1 -2z" fill="#c9c9c9" stroke="#a2a2a2" stroke-width=".5"/><path d="M1 -2 L9 -5.5 L9 2.5 L1 5.8z" fill="#999" opacity=".7"/></g>
<path d="M629.5 86.5h4.5M629.5 89.7h4.5M629.5 92.9h4.5" stroke="#d3cfca" stroke-width="1"/>
<g transform="translate(655 89)"><ellipse cx="5.5" cy="9" rx="7" ry="2.4" fill="url(#gShd)" opacity="0.8"/><circle cx="4" cy="-4.8" r="7" fill="url(#gBlueL)" stroke="#5a6ad8" stroke-width=".6"/><circle cx="-3.2" cy="3.2" r="7.9" fill="url(#gBlueS)" stroke="#06206e" stroke-width=".6"/></g>
<g transform="translate(690 89)"><ellipse cx="6.5" cy="9.5" rx="6" ry="1.8" fill="url(#gShd)" opacity="0.45"/><circle cx="-3.2" cy="3.2" r="7.9" fill="url(#gGryS)" stroke="#7a7a7a" stroke-width=".6"/><circle cx="4" cy="-4.8" r="7" fill="#ffffff" stroke="#8a8a8a" stroke-width=".8"/></g>
<g transform="translate(726 89)"><ellipse cx="6.5" cy="9.5" rx="6" ry="1.8" fill="url(#gShd)" opacity="0.45"/><g fill="url(#gFuse)" stroke="#7a7a7a" stroke-width=".5"><circle cx="3.6" cy="-4.4" r="7"/><circle cx="-3.2" cy="3.2" r="7.9"/></g><g fill="url(#gFuse)"><circle cx="3.6" cy="-4.4" r="6.8"/><circle cx="-3.2" cy="3.2" r="7.7"/><path d="M-6 -3.5 L-1 -8.5 L8 -.5 L3 6z"/></g></g>
<g transform="translate(761.5 89)"><ellipse cx="6.5" cy="9.5" rx="5" ry="1.5" fill="url(#gShd)" opacity="0.4"/><clipPath id="cpA"><circle cx="-2.7" cy="2.9" r="8"/></clipPath><circle cx="-2.7" cy="2.9" r="8" fill="#fff" stroke="#7d7d7d" stroke-width=".9"/><circle cx="3" cy="-4" r="7.3" fill="#fff" fill-opacity=".75" stroke="#7d7d7d" stroke-width=".9"/><circle cx="3" cy="-4" r="7.3" fill="url(#gFuse)" clip-path="url(#cpA)"/><circle cx="-2.7" cy="2.9" r="8" fill="none" stroke="#7d7d7d" stroke-width=".9"/></g>
<g transform="translate(796 89)"><ellipse cx="8" cy="8.5" rx="5" ry="2" fill="url(#gShd)" opacity="0.35"/><path d="M-1.5 -8 L-9.5 8 A9.5 2.6 0 0 0 9.5 8z" fill="url(#gGryS)" stroke="#8e8e8e" stroke-width=".6"/><path d="M1.5 -5 L10 2" stroke="#8a8a8a" stroke-width="1.3"/><circle cx="-1" cy="-7.5" r="4.2" fill="#e0e0e0" fill-opacity=".85" stroke="#a8a8a8" stroke-width="1"/></g></svg>
<div class="abs nw" style="left:2.2px;top:112px;line-height:18px">Combo View</div>
<svg width="30" height="12" style="left:187px;top:115.5px" viewBox="0 0 30 12">
<rect x=".5" y=".5" width="10.5" height="10.5" rx="2.2" fill="#f4f3f2" stroke="#8f8d88"/>
<rect x="4.7" y="2.7" width="4.2" height="4" rx=".8" fill="none" stroke="#5f5e59" stroke-width="1"/>
<rect x="2.6" y="4.6" width="4.2" height="4" rx=".8" fill="#f4f3f2" stroke="#5f5e59" stroke-width="1"/>
<rect x="17.5" y=".5" width="10.5" height="10.5" rx="2.2" fill="#f4f3f2" stroke="#8f8d88"/>
<path d="M20 3 L25.5 8.5 M25.5 3 L20 8.5" stroke="#3a3a38" stroke-width="1.9"/>
</svg>
<div class="abs" style="left:1px;top:162px;width:217px;height:496px;border:1px solid #cbc8c2;border-radius:4px;background:#f5f4f3"></div>
<div class="abs" style="left:57px;top:136px;width:50.5px;height:27px;border:1px solid #c8c4be;border-bottom:none;border-radius:4px 4px 0 0;background:linear-gradient(#f0efed,#e6e4e1)"></div>
<div class="abs nw" style="left:65.5px;top:139.5px;line-height:18px">Tasks</div>
<div class="abs" style="left:1px;top:134px;width:57px;height:30px;border:1px solid #c2beb8;border-bottom:none;border-radius:4px 4px 0 0;background:#f5f4f3"></div>
<div class="abs nw" style="left:7.6px;top:138.5px;line-height:18px;letter-spacing:.8px">Model</div>
<div class="abs" style="left:2px;top:164px;width:213px;height:224px;border:1px solid #b9b5af;background:#fff;box-shadow:inset 1px 1px 0 #e4e2df"></div>
<div class="abs" style="left:3px;top:165px;width:210.5px;height:24px;background:linear-gradient(#fdfdfd,#ecebe9);border-bottom:1px solid #c6c2bc;border-right:1px solid #d6d3ce"></div>
<div class="abs nw" style="left:6.6px;top:169.3px;line-height:18px;letter-spacing:.3px">Labels &amp; Attributes</div>
<div class="abs" style="left:3px;top:301.22px;width:211px;height:18.6px;background:#d9d8d6"></div>
<div class="abs nw" style="left:5.7px;top:189.80px;line-height:18.67px;letter-spacing:0.45px;">Application</div>
<div class="abs nw" style="left:46.7px;top:208.47px;line-height:18.67px;letter-spacing:0.05px;">T03-ejemplo-1-cubos</div>
<div class="abs nw" style="left:66.7px;top:227.14px;line-height:18.67px;letter-spacing:0px;">Cube</div>
<div class="abs nw" style="left:66.7px;top:245.81px;line-height:18.67px;letter-spacing:0px;font-weight:bold;">Cube001</div>
<div class="abs nw" style="left:46.7px;top:264.48px;line-height:18.67px;letter-spacing:0.1px;font-weight:bold;">T03-ejemplo-2-piramide</div>
<div class="abs nw" style="left:66.7px;top:283.15px;line-height:18.67px;letter-spacing:0px;">Solid</div>
<div class="abs nw" style="left:66.7px;top:301.82px;line-height:18.67px;letter-spacing:0px;font-weight:bold;">Distance: 10.000</div>
<svg width="220" height="140" style="left:0;top:190px" viewBox="0 190 220 140"><defs><linearGradient id="gBlue2" x1="0" y1="0" x2="1" y2="1"><stop offset="0" stop-color="#5a86e8"/><stop offset="1" stop-color="#1a38b0"/></linearGradient></defs><path d="M11.5 214.77h7.5l-3.75 5.6z" fill="#4a4a4a"/><g transform="translate(33.3 217.47)"><rect x="-6.3" y="-7.8" width="12.6" height="15.6" fill="#f3f3f3" stroke="#c9c9c9" stroke-width=".8"/><path d="M-1.5 -3.5 a3.3 3.3 0 0 1 6.6 0 l0 1.5 h-6.6z" fill="#e02222"/><path d="M-4.6 -.8 L-1.8 -2.6 L2.8 -2 L2.8 3.5 L-.2 5.5 L-4.6 4.6z" fill="#2a48d0" stroke="#142a90" stroke-width=".5"/></g><g transform="translate(52 236.24)"><path d="M-6.5 7 L7.5 6.2 M5.6 -6 V7" stroke="#e21a1a" stroke-width="1.3"/><path d="M-6 -5 L-2 -7.2 L5.2 -6.5 L5.2 4.5 L1.2 7 L-6 6z" fill="#0c1e7a" stroke="#081250" stroke-width=".8" stroke-linejoin="round"/><path d="M-5.5 -4.2 L1 -3.5 L1 6.2 L-5.5 5.3z" fill="url(#gBlue2)"/><path d="M-5 -5 L-2 -6.6 L4.4 -6 L1.4 -4.3z" fill="#3c62d8"/></g><g transform="translate(52 254.91)"><path d="M-6.5 7 L7.5 6.2 M5.6 -6 V7" stroke="#e21a1a" stroke-width="1.3"/><path d="M-6 -5 L-2 -7.2 L5.2 -6.5 L5.2 4.5 L1.2 7 L-6 6z" fill="#0c1e7a" stroke="#081250" stroke-width=".8" stroke-linejoin="round"/><path d="M-5.5 -4.2 L1 -3.5 L1 6.2 L-5.5 5.3z" fill="url(#gBlue2)"/><path d="M-5 -5 L-2 -6.6 L4.4 -6 L1.4 -4.3z" fill="#3c62d8"/></g><path d="M11.5 270.78h7.5l-3.75 5.6z" fill="#4a4a4a"/><g transform="translate(33.3 273.48)"><rect x="-6.3" y="-7.8" width="12.6" height="15.6" fill="#f3f3f3" stroke="#c9c9c9" stroke-width=".8"/><path d="M-1.5 -3.5 a3.3 3.3 0 0 1 6.6 0 l0 1.5 h-6.6z" fill="#e02222"/><path d="M-4.6 -.8 L-1.8 -2.6 L2.8 -2 L2.8 3.5 L-.2 5.5 L-4.6 4.6z" fill="#2a48d0" stroke="#142a90" stroke-width=".5"/></g><g transform="translate(53.2 292.25000000000006) scale(0.8)"><path d="M-7.5 -5 L-4.5 -8 L7.5 -7 L7.5 4.5 L4 8 L-7 7z" fill="#0a0a2a" stroke="#05051a" stroke-width="1.2" stroke-linejoin="round"/><path d="M-6.8 -4.5 L3.5 -3.8 L3.5 7 L-6.5 6.2z" fill="#0c14f0"/><path d="M-6.5 -5.2 L-4.2 -7.3 L6.8 -6.4 L3.8 -4.5z" fill="#1a28ff"/><path d="M4.4 -4 L7 -6.2 L7 4.2 L4.4 6.8z" fill="#0610c8"/></g><g transform="translate(53.5 311.12)"><path d="M-6.5 -3.5 L-2.8 -6.5 L6 3.5 L3 7z" fill="#5f7f8c" stroke="#2f3f46" stroke-width=".8"/><path d="M-6.5 -3.5 L3 7 L1.6 7.6 L-7 -2z" fill="#26343a"/><path d="M-3 -3l1.4-1.2M-.9 -.6l1.4-1.2M1.2 1.8l1.4-1.2" stroke="#1f2a2f" stroke-width=".7"/><circle cx="4.8" cy="-5.2" r="1.7" fill="none" stroke="#5a3fe0" stroke-width="1.2"/><circle cx="2.8" cy="-3.6" r="1.3" fill="none" stroke="#5a3fe0" stroke-width="1"/></g></svg>
<div class="abs" style="left:106px;top:389px;width:8px;height:3px;border-left:1px solid #c5c1bb;border-right:1px solid #c5c1bb"></div><div class="abs" style="left:109.5px;top:389px;width:1px;height:3px;background:#c5c1bb"></div>
<div class="abs" style="left:2px;top:394px;width:213px;height:233px;border:1px solid #b9b5af;background:#fff;box-shadow:inset 1px 1px 0 #e4e2df"></div>
<div class="abs" style="left:4.5px;top:396px;width:208.5px;height:24px;background:linear-gradient(#fdfdfd,#ecebe9);border-bottom:1px solid #c6c2bc"></div>
<div class="abs" style="left:102px;top:396px;width:1px;height:24px;background:#d3d0cb"></div>
<div class="abs nw" style="left:8.6px;top:400px;line-height:18px;letter-spacing:.5px">Property</div><div class="abs nw" style="left:106.6px;top:400px;line-height:18px;letter-spacing:.5px">Value</div>
<div class="abs" style="left:4.5px;top:420.3px;width:208.5px;height:20.2px;background:#c4c3c1"></div>
<div class="abs nw" style="left:28px;top:422.40000000000003px;line-height:19.58px;font-weight:bold;color:#fff">Base</div>
<div class="abs" style="left:4.5px;top:440.50px;width:208.5px;height:19.58px;background:#efefee"></div>
<div class="abs" style="left:24.5px;top:459.08px;width:188px;height:1px;background:#d2d1cf"></div>
<div class="abs" style="left:102.3px;top:440.50px;width:1px;height:19.58px;background:#d2d1cf"></div>
<div class="abs nw" style="left:27px;top:442.30px;line-height:19.58px;letter-spacing:0.15px;">Display …</div>
<div class="abs nw" style="left:106px;top:442.30px;line-height:19.58px;letter-spacing:0px">Base</div>
<div class="abs" style="left:24.5px;top:478.66px;width:188px;height:1px;background:#d2d1cf"></div>
<div class="abs" style="left:102.3px;top:460.08px;width:1px;height:19.58px;background:#d2d1cf"></div>
<div class="abs nw" style="left:27px;top:461.88px;line-height:19.58px;letter-spacing:0px;">Dist Factor</div>
<div class="abs nw" style="left:106px;top:461.88px;line-height:19.58px;letter-spacing:0px">0,20</div>
<div class="abs" style="left:4.5px;top:479.66px;width:208.5px;height:19.58px;background:#efefee"></div>
<div class="abs" style="left:24.5px;top:498.24px;width:188px;height:1px;background:#d2d1cf"></div>
<div class="abs" style="left:102.3px;top:479.66px;width:1px;height:19.58px;background:#d2d1cf"></div>
<div class="abs nw" style="left:27px;top:481.46px;line-height:19.58px;letter-spacing:0px;">Font Size</div>
<div class="abs nw" style="left:106px;top:481.46px;line-height:19.58px;letter-spacing:0.7px">18</div>
<div class="abs" style="left:4.5px;top:499.24px;width:98px;height:19.58px;background:#ed7443"></div>
<div class="abs" style="left:24.5px;top:517.82px;width:188px;height:1px;background:#d2d1cf"></div>
<div class="abs" style="left:102.3px;top:499.24px;width:1px;height:19.58px;background:#d2d1cf"></div>
<div class="abs nw" style="left:27px;top:501.04px;line-height:19.58px;letter-spacing:0.2px;color:#fff;">Line Color</div>
<div class="abs" style="left:106px;top:499.24px;width:24px;height:18.979999999999997px;background:#ffff00"></div>
<div class="abs" style="left:126.5px;top:501.24px;width:86px;height:16px;background:#f8f8f7;border:1px solid #d8d5d0;border-radius:4px;box-shadow:0 1px 1px rgba(0,0,0,.15)"></div>
<div class="abs" style="left:130px;top:504.54px;width:80px;height:10.4px;background:#ffff00;border:1px solid #5c5c18"></div>
<div class="abs" style="left:4.5px;top:518.82px;width:208.5px;height:19.58px;background:#efefee"></div>
<div class="abs" style="left:24.5px;top:537.40px;width:188px;height:1px;background:#d2d1cf"></div>
<div class="abs" style="left:102.3px;top:518.82px;width:1px;height:19.58px;background:#d2d1cf"></div>
<div class="abs nw" style="left:27px;top:520.62px;line-height:19.58px;letter-spacing:0.6px;">Mirror</div>
<div class="abs nw" style="left:106px;top:520.62px;line-height:19.58px;letter-spacing:1px">true</div>
<div class="abs" style="left:24.5px;top:556.98px;width:188px;height:1px;background:#d2d1cf"></div>
<div class="abs" style="left:102.3px;top:538.40px;width:1px;height:19.58px;background:#d2d1cf"></div>
<div class="abs nw" style="left:27px;top:540.20px;line-height:19.58px;letter-spacing:0.25px;">Text Color</div>
<div class="abs" style="left:106px;top:538.60px;width:23.5px;height:18.18px;background:#0000ff"></div>
<div class="abs nw" style="left:136px;top:540.20px;line-height:19.58px">[0, 0, 255]</div>
<div class="abs" style="left:4.5px;top:557.98px;width:208.5px;height:19.58px;background:#efefee"></div>
<div class="abs" style="left:24.5px;top:576.56px;width:188px;height:1px;background:#d2d1cf"></div>
<div class="abs" style="left:102.3px;top:557.98px;width:1px;height:19.58px;background:#d2d1cf"></div>
<div class="abs nw" style="left:27px;top:559.78px;line-height:19.58px;letter-spacing:0.5px;">Visibility</div>
<div class="abs nw" style="left:106px;top:559.78px;line-height:19.58px;letter-spacing:1px">true</div>
<svg width="120" height="34" style="left:0;top:626px" viewBox="0 626 120 34">
<path d="M2 627.5 L10 652.5 Q11 656.3 15 656.3 L37 656.3 Q41 656.3 42.2 652.5 L50.5 627.5z" fill="#ffffff" stroke="none"/>
<path d="M2 627.5 L10 652.5 Q11 656.3 15 656.3 L37 656.3 Q41 656.3 42.2 652.5 L50.5 627.5" fill="none" stroke="#4c4c4a" stroke-width="1"/>
<path d="M52.5 629.5 L60.5 651 Q61.5 654.5 65 654.5 L84.5 654.5 Q88 654.5 89 651 L96.5 629.5" fill="#eeedeb" stroke="#4c4c4a" stroke-width="1"/>
</svg>
<div class="abs nw" style="left:11px;top:632px;line-height:18px">View</div><div class="abs nw" style="left:59.5px;top:631px;line-height:18px">Data</div>
<div id="view" class="abs"></div>
<svg width="971" height="519" style="left:224px;top:108px" viewBox="224 108 971 519"><g stroke="#1a1a1a" stroke-width="2" stroke-linecap="round" fill="none"><line x1="717" y1="217.5" x2="608.8" y2="449.3" /><line x1="717" y1="217.5" x2="705.9" y2="389.3" /><line x1="717" y1="217.5" x2="741.3" y2="488" /><line x1="717" y1="217.5" x2="838.2" y2="428.4" /><line x1="608.8" y1="449.3" x2="705.9" y2="389.3" /><line x1="705.9" y1="389.3" x2="838.2" y2="428.4" /><line x1="838.2" y1="428.4" x2="741.3" y2="488" /><line x1="741.3" y1="488" x2="608.8" y2="449.3" /></g><polyline points="741.3,488 741.3,517.3 838.5,458.3 838.5,428.4" fill="none" stroke="#f5f000" stroke-width="2" stroke-linejoin="miter"/><line x1="741.3" y1="488" x2="838.2" y2="428.4" stroke="#0d6a0d" stroke-width="1.8"/><line x1="741.3" y1="488" x2="838.2" y2="428.4" stroke="#1ef01e" stroke-width="1.5" stroke-dasharray="1.6 1"/><circle cx="744.6" cy="485.3" r="3.1" fill="#e00d0d"/><circle cx="833.6" cy="431.4" r="3.1" fill="#e00d0d"/><path d="M737.3 484 L745.3 492 M737.3 492 L745.3 484" stroke="#e8dc3a" stroke-width="1" fill="none"/><path d="M834.2 424.4 L842.2 432.4 M834.2 432.4 L842.2 424.4" stroke="#e8dc3a" stroke-width="1" fill="none"/><g font-family="'Liberation Serif',serif" ><g transform="translate(0 449.5) scale(1 1.075)"><text font-size="29" fill="#22e022" y="0"><tspan x="741.5">1</tspan><tspan x="760.5">0</tspan></text></g><g transform="translate(797 449.5) scale(0.8 1)"><text font-size="29" fill="#22e022" x="0" y="0">m</text></g><g transform="translate(815.5 449.5) scale(0.8 1)"><text font-size="29" fill="#22e022" x="0" y="0">m</text></g><g transform="translate(0 481.5) scale(1 1.08)"><text font-size="21" fill="#1a1ae6" y="0"><tspan x="791.5">1</tspan><tspan x="805.5">0</tspan></text></g><g transform="translate(832 481.5) scale(0.8 1)"><text font-size="21" fill="#1a1ae6" x="0" y="0">m</text></g><g transform="translate(845.5 481.5) scale(0.8 1)"><text font-size="21" fill="#1a1ae6" x="0" y="0">m</text></g></g><g stroke-width="2.2" fill="none"><line x1="1169.5" y1="600.5" x2="1169.5" y2="583" stroke="#1c1c96"/><line x1="1167.8" y1="585.5" x2="1167.8" y2="590.5" stroke="#1c1c96" stroke-width="1.5"/><line x1="1169.5" y1="600" x2="1186" y2="606" stroke="#8e1d1d"/><line x1="1170" y1="599.5" x2="1176.5" y2="596" stroke="#1d9a1d" stroke-width="2.4" stroke-linecap="round"/></g><g font-family="'Liberation Sans',sans-serif" font-size="9.5" fill="#111"><text x="1170.6" y="582.7">Z</text><text x="1179.7" y="595.7">Y</text><text x="1188.6" y="606.6">X</text></g></svg>
<div class="abs" style="left:224px;top:627px;width:220px;height:28.5px;background:linear-gradient(#e9e7e4,#efeeec);border:1px solid #c9c5bf;border-top:none;border-radius:0 0 5px 5px"></div>
<div class="abs" style="left:443px;top:627px;width:246px;height:31.5px;background:#f9f9f8;border:1px solid #c4c0ba;border-top:none;border-radius:0 0 5px 5px;box-shadow:0 1px 1px rgba(0,0,0,.08)"></div>
<svg width="480" height="34" style="left:224px;top:626px" viewBox="224 626 480 34"><defs><linearGradient id="gF" x1="0" y1="0" x2="0" y2="1"><stop offset="0" stop-color="#ff5a10"/><stop offset="1" stop-color="#d81808"/></linearGradient></defs><g transform="translate(232 634.3)"><path d="M0 0 H7 V2.8 H3.1 V5 H6 V7.7 H3.1 V11.7 H0z" fill="url(#gF)" stroke="#b01a0a" stroke-width=".4"/><g transform="translate(8.4 7.9)"><path d="M-1 -5.2h2l.4 1.5 1.3.55 1.35-.8 1.4 1.4-.8 1.35.55 1.3 1.5.4v2l-1.5.4-.55 1.3.8 1.35-1.4 1.4-1.35-.8-1.3.55-.4 1.5h-2l-.4-1.5-1.3-.55-1.35.8-1.4-1.4.8-1.35-.55-1.3-1.5-.4v-2l1.5-.4.55-1.3-.8-1.35 1.4-1.4 1.35.8 1.3-.55z" transform="scale(.9)" fill="#1a34a4"/><circle r="1.6" fill="#f4f4f4"/></g></g><g transform="translate(450.5 634.3)"><path d="M0 0 H7 V2.8 H3.1 V5 H6 V7.7 H3.1 V11.7 H0z" fill="url(#gF)" stroke="#b01a0a" stroke-width=".4"/><g transform="translate(8.4 7.9)"><path d="M-1 -5.2h2l.4 1.5 1.3.55 1.35-.8 1.4 1.4-.8 1.35.55 1.3 1.5.4v2l-1.5.4-.55 1.3.8 1.35-1.4 1.4-1.35-.8-1.3.55-.4 1.5h-2l-.4-1.5-1.3-.55-1.35.8-1.4-1.4.8-1.35-.55-1.3-1.5-.4v-2l1.5-.4.55-1.3-.8-1.35 1.4-1.4 1.35.8 1.3-.55z" transform="scale(.9)" fill="#1a34a4"/><circle r="1.6" fill="#f4f4f4"/></g></g><path d="M420.3 637.3 l9.5 9.5 M429.8 637.3 l-9.5 9.5" stroke="#5a5a58" stroke-width="3"/><path d="M666.8 637.3 l9.5 9.5 M676.3 637.3 l-9.5 9.5" stroke="#5a5a58" stroke-width="3"/></svg>
<div class="abs nw" style="left:254px;top:633px;line-height:18px">T03-ejemplo-1-cubos : 1</div>
<div class="abs nw" style="left:473px;top:633px;line-height:18px;letter-spacing:.15px">T03-ejemplo-2-piramide : 1*</div>
<div id="status" class="abs"><span class="abs nw" style="left:5.6px;top:4.5px;line-height:18px;letter-spacing:.6px">Valid</span><span class="abs nw" style="left:1054px;top:5.5px;line-height:18px">59.23 x 31.56 mm</span></div>
<svg width="14" height="14" style="left:1180px;top:672px" viewBox="0 0 14 14"><g fill="#d4d1cc"><rect x="10" y="2" width="2" height="2"/><rect x="6" y="6" width="2" height="2"/><rect x="10" y="6" width="2" height="2"/><rect x="2" y="10" width="2" height="2"/><rect x="6" y="10" width="2" height="2"/><rect x="10" y="10" width="2" height="2"/></g></svg>
</body></html>
